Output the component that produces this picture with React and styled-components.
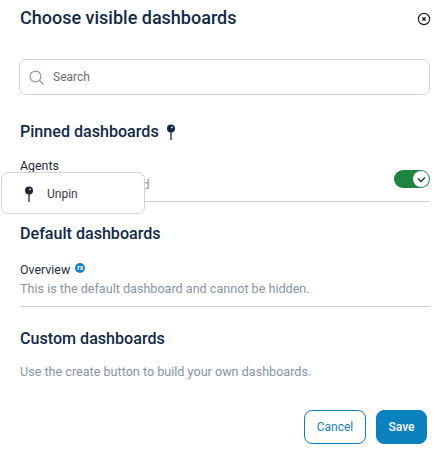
import React from 'react';
import styled, { createGlobalStyle } from 'styled-components';

const GlobalStyle = createGlobalStyle`
  html, body {
    margin: 0;
    padding: 0;
    background: #fff;
    font-family: Roboto, "Liberation Sans", sans-serif;
  }
  * { box-sizing: border-box; }
`
const Dialog = styled.section`
  position: relative;
  width: 436px;
  height: 451px;
  padding: 7px 5px 0 20px;
  background: #fff;
  overflow: hidden;
`
const Header = styled.header`
  display: flex;
  align-items: center;
  justify-content: space-between;
  height: 22px;
`
const Title = styled.h1`
  margin: 0;
  font-size: 18px;
  line-height: 22px;
  font-weight: 500;
  color: #0f2a47;
`
const CloseButton = styled.button`
  display: flex;
  width: 14px;
  height: 14px;
  margin-top: 1px;
  padding: 0;
  border: 0;
  background: none;
`
const SearchBox = styled.label`
  display: flex;
  align-items: center;
  gap: 9px;
  width: 411px;
  height: 36px;
  margin: 30px 0 0 -1px;
  padding: 0 9px;
  border: 1px solid #d0d3d6;
  border-radius: 7px;
`
const SearchInput = styled.input`
  flex: 1;
  border: 0;
  outline: 0;
  padding: 0;
  font: 400 12px Roboto, sans-serif;
  color: #555;
  &::placeholder { color: #666d73; opacity: 1; }
`
const SectionTitle = styled.h2`
  display: flex;
  align-items: center;
  gap: 7px;
  margin: ${(p) => p.$top}px 0 0;
  font-size: 16.1px;
  line-height: 20px;
  font-weight: 500;
  color: #0f2a47;
`
const Row = styled.div`
  display: flex;
  align-items: center;
  justify-content: space-between;
  width: 410px;
  margin-top: ${(p) => p.$top}px;
  padding-bottom: ${(p) => p.$bottom}px;
  border-bottom: 1px solid #cfd1d3;
`
const RowName = styled.div`
  display: flex;
  align-items: center;
  gap: 4px;
  font-size: 12.4px;
  line-height: 18px;
  color: #1a2b3c;
`
const RowHint = styled.div`
  font-size: 12.6px;
  line-height: 20px;
  color: #8595a5;
`
const Hint = styled(RowHint)`
  margin-top: 13px;
`
const Toggle = styled.div`
  display: flex;
  justify-content: flex-end;
  align-items: center;
  width: 36px;
  height: 18px;
  margin: 6px 0 0;
  padding: 1px;
  border-radius: 9px;
  background: #1e8540;
`
const Knob = styled.span`
  display: flex;
  align-items: center;
  justify-content: center;
  width: 16px;
  height: 16px;
  border-radius: 50%;
  background: #fff;
`
const RxBadge = styled.span`
  display: flex;
  align-items: center;
  justify-content: center;
  width: 10px;
  height: 10px;
  margin: -4px 0 0 1px;
  border-radius: 50%;
  background: #0d84c4;
  color: #fff;
  font-size: 7px;
  font-weight: 700;
  line-height: 10px;
`
const Footer = styled.footer`
  display: flex;
  justify-content: flex-end;
  gap: 10px;
  width: 407px;
  margin-top: 28px;
`
const Button = styled.button`
  width: ${(p) => (p.$primary ? 51 : 62)}px;
  height: 34px;
  padding: 0;
  border: 1px solid #0a80bc;
  border-radius: 8px;
  background: ${(p) => (p.$primary ? '#0a80bc' : '#fff')};
  color: ${(p) => (p.$primary ? '#fff' : '#1b7fb5')};
  font: ${(p) => (p.$primary ? 500 : 400)} 12px Roboto, sans-serif;
`
const PinMenu = styled.div`
  position: absolute;
  left: 1px;
  top: 172px;
  display: flex;
  align-items: center;
  gap: 13px;
  width: 144px;
  height: 42px;
  padding: 2px 0 0 22px;
  border: 1px solid #d3d5d7;
  border-radius: 7px;
  background: #fff;
  font-size: 12px;
  color: #333a40;
`

const Pin = ({ color }) => (
  <svg width="10" height="16" viewBox="0 0 10 16" fill="none">
    <circle cx="5" cy="4.5" r="4" fill={color} />
    <circle cx="6" cy="3.4" r="0.8" fill="#fff" />
    <path d="M5 8v8" stroke={color} strokeWidth="1.3" />
  </svg>
);

function App() {
  return (
    <Dialog>
      <GlobalStyle />
      <Header>
        <Title>Choose visible dashboards</Title>
        <CloseButton aria-label="Close">
          <svg width="14" height="14" viewBox="0 0 14 14" fill="none">
            <circle cx="7" cy="7" r="5.6" stroke="#1c2430" strokeWidth="1.2" />
            <path d="M5.3 5.3l3.4 3.4M8.7 5.3l-3.4 3.4" stroke="#1c2430" strokeWidth="1.3" />
          </svg>
        </CloseButton>
      </Header>

      <SearchBox>
        <svg width="15" height="15" viewBox="0 0 15 15" fill="none">
          <circle cx="6.5" cy="6.5" r="5.4" stroke="#8494a3" strokeWidth="1.1" />
          <path d="M10.5 10.5l4 4" stroke="#8494a3" strokeWidth="1.1" />
        </svg>
        <SearchInput placeholder="Search" />
      </SearchBox>

      <SectionTitle $top={27}>
        Pinned dashboards <Pin color="#0f2a47" />
      </SectionTitle>
      <Row $top={15} $bottom={6}>
        <div>
          <RowName>Agents</RowName>
          <RowHint>This dashboard is fixed</RowHint>
        </div>
        <Toggle>
          <Knob>
            <svg width="9" height="7" viewBox="0 0 9 7" fill="none">
              <path d="M1 2.5l3 3 4-4" stroke="#1c2f4a" strokeWidth="1.3" />
            </svg>
          </Knob>
        </Toggle>
      </Row>

      <SectionTitle $top={22}>Default dashboards</SectionTitle>
      <Row $top={17} $bottom={7}>
        <div>
          <RowName>
            Overview <RxBadge>rx</RxBadge>
          </RowName>
          <RowHint>This is the default dashboard and cannot be hidden.</RowHint>
        </div>
      </Row>

      <SectionTitle $top={22}>Custom dashboards</SectionTitle>
      <Hint>Use the create button to build your own dashboards.</Hint>

      <Footer>
        <Button>Cancel</Button>
        <Button $primary>Save</Button>
      </Footer>

      <PinMenu>
        <Pin color="#1c2430" />
        Unpin
      </PinMenu>
    </Dialog>
  );
}

export default App;
